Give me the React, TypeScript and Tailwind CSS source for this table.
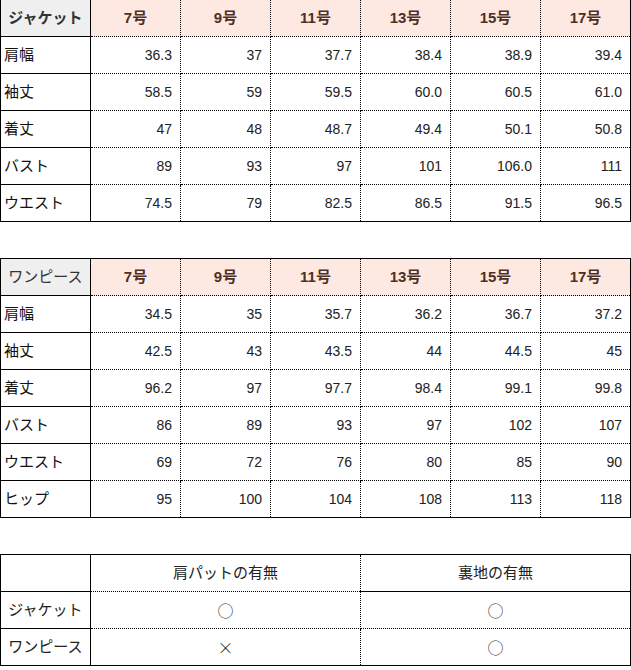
const font = "font-['Liberation_Sans','Noto_Sans_CJK_JP',sans-serif]";

type SizeTable = {
  title: string;
  bold: boolean;
  rows: [string, string[]][];
};

const sizes = ["7号", "9号", "11号", "13号", "15号", "17号"];

const jacket: SizeTable = {
  title: "ジャケット",
  bold: true,
  rows: [
    ["肩幅", ["36.3", "37", "37.7", "38.4", "38.9", "39.4"]],
    ["袖丈", ["58.5", "59", "59.5", "60.0", "60.5", "61.0"]],
    ["着丈", ["47", "48", "48.7", "49.4", "50.1", "50.8"]],
    ["バスト", ["89", "93", "97", "101", "106.0", "111"]],
    ["ウエスト", ["74.5", "79", "82.5", "86.5", "91.5", "96.5"]],
  ],
};

const onepiece: SizeTable = {
  title: "ワンピース",
  bold: false,
  rows: [
    ["肩幅", ["34.5", "35", "35.7", "36.2", "36.7", "37.2"]],
    ["袖丈", ["42.5", "43", "43.5", "44", "44.5", "45"]],
    ["着丈", ["96.2", "97", "97.7", "98.4", "99.1", "99.8"]],
    ["バスト", ["86", "89", "93", "97", "102", "107"]],
    ["ウエスト", ["69", "72", "76", "80", "85", "90"]],
    ["ヒップ", ["95", "100", "104", "108", "113", "118"]],
  ],
};

function Sizes({ data, className }: { data: SizeTable; className?: string }) {
  return (
    <table
      className={`w-[631px] table-fixed border-collapse border border-solid border-black ${font} ${className ?? ""}`}
    >
      <colgroup>
        <col className="w-[90px]" />
        {sizes.map((s) => (
          <col key={s} />
        ))}
      </colgroup>
      <thead>
        <tr className="h-[37px]">
          <th
            className={`border border-solid border-black bg-[#efefef] p-0 text-center text-[15px] text-[#333] ${
              data.bold ? "font-bold" : "font-normal"
            }`}
          >
            {data.title}
          </th>
          {sizes.map((s) => (
            <th
              key={s}
              className="border-y border-r border-dotted border-y-black border-r-black bg-[#fde9e2] p-0 text-center text-[15px] font-bold text-[#4d2f26]"
            >
              {s}
            </th>
          ))}
        </tr>
      </thead>
      <tbody>
        {data.rows.map(([label, vals]) => (
          <tr key={label} className="h-[37px]">
            <td className="border-r border-b border-solid border-black p-0 pl-[3px] text-left text-[15px] text-[#111]">
              {label}
            </td>
            {vals.map((v, i) => (
              <td
                key={i}
                className="border-r border-b border-dotted border-black p-0 pr-[8px] text-right text-[14px] text-[#222]"
              >
                {v}
              </td>
            ))}
          </tr>
        ))}
      </tbody>
    </table>
  );
}

function Lining() {
  const rows: [string, string, string][] = [
    ["ジャケット", "○", "○"],
    ["ワンピース", "×", "○"],
  ];
  const mark = "font-['Noto_Sans_CJK_JP',sans-serif] text-[16px] font-light";
  return (
    <table className={`w-[631px] table-fixed border-collapse border border-solid border-black ${font}`}>
      <colgroup>
        <col className="w-[90px]" />
        <col />
        <col />
      </colgroup>
      <thead>
        <tr className="h-[37px]">
          <th className="border-r border-b border-solid border-black p-0" />
          <th className="border-r border-b border-dotted border-black p-0 text-center text-[15px] font-normal text-[#222]">
            肩パットの有無
          </th>
          <th className="border-b border-solid border-black p-0 text-center text-[15px] font-normal text-[#222]">
            裏地の有無
          </th>
        </tr>
      </thead>
      <tbody>
        {rows.map(([label, a, b]) => (
          <tr key={label} className="h-[37px]">
            <td className="border-r border-b border-solid border-black p-0 text-center text-[15px] text-[#222]">
              {label}
            </td>
            <td className={`border-r border-b border-dotted border-black p-0 text-center text-[#222] ${mark}`}>
              {a}
            </td>
            <td className={`border-b border-dotted border-black p-0 text-center text-[#222] ${mark}`}>{b}</td>
          </tr>
        ))}
      </tbody>
    </table>
  );
}

export default function App() {
  return (
    <div className="flex w-[631px] flex-col overflow-hidden bg-white">
      <Sizes data={jacket} className="-mt-px" />
      <Sizes data={onepiece} className="mt-[36px]" />
      <div className="mt-[36px]">
        <Lining />
      </div>
    </div>
  );
}
